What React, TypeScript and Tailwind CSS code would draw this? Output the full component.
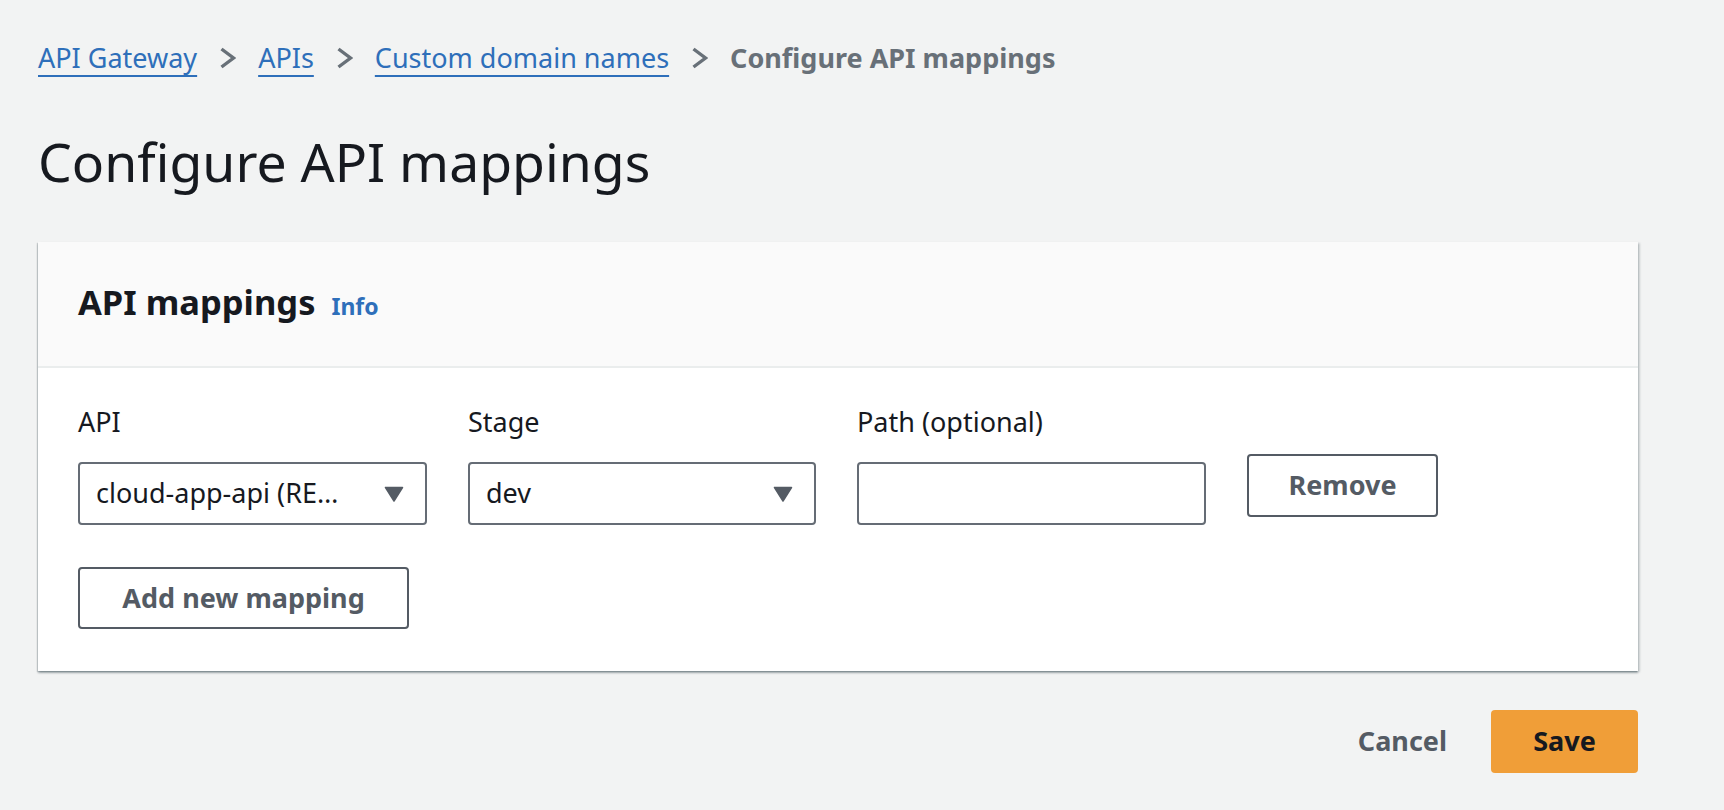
import React from 'react'

const font = { fontFamily: '"Noto Sans", "Open Sans", Arial, sans-serif' }

function Chevron() {
  return (
    <svg width="17" height="22" viewBox="0 0 17 22" className="shrink-0">
      <path d="M2.5 2 L14.5 11 L2.5 20" fill="none" stroke="#687078" strokeWidth="3.4" strokeLinejoin="miter" />
    </svg>
  )
}

function Caret() {
  return (
    <svg width="20" height="16" viewBox="0 0 20 16" className="shrink-0">
      <path d="M1.5 1.5 H18.5 L10 15 Z" fill="#545b64" stroke="#545b64" strokeWidth="1.5" strokeLinejoin="round" />
    </svg>
  )
}

function Crumb({ children }: { children: React.ReactNode }) {
  return (
    <a href="#" className="text-[#2e6fba] underline decoration-2 underline-offset-[7px]">
      {children}
    </a>
  )
}

export default function App() {
  return (
    <div className="min-h-screen bg-[#f2f3f3] text-[#16191f]" style={font}>
      <div className="pl-[38px] pr-[86px] pt-[40px]">
        <nav className="flex items-center gap-[22px] text-[27px] leading-[36px]">
          <Crumb>API Gateway</Crumb>
          <Chevron />
          <Crumb>APIs</Crumb>
          <Chevron />
          <Crumb>Custom domain names</Crumb>
          <Chevron />
          <span className="font-bold text-[#687078]">Configure API mappings</span>
        </nav>

        <h1 className="mt-[54px] text-[53.5px] leading-[64px] font-normal">Configure API mappings</h1>

        <section className="mt-[48px] w-[1600px] bg-white shadow-[0_2px_2px_rgba(0,28,36,0.3),2px_1px_2px_rgba(0,28,36,0.15),-1px_1px_1px_rgba(0,28,36,0.15)]">
          <div className="flex items-baseline gap-[16px] border-b-2 border-[#eaeded] bg-[#fafafa] px-[40px] pt-[38px] pb-[42px]">
            <h2 className="text-[34.5px] leading-[44px] font-bold">API mappings</h2>
            <a href="#" className="text-[23px] font-bold text-[#2e6fba]">Info</a>
          </div>

          <div className="px-[40px] pt-[36px] pb-[42px]">
            <div className="flex items-start gap-[41px]">
              <div className="w-[349px]">
                <div className="text-[27px] leading-[36px]">API</div>
                <div className="mt-[22px] flex h-[63px] items-center rounded-[4px] border-2 border-[#656c75] pl-[16px] pr-[21px] text-[27px]">
                  <span className="whitespace-nowrap">cloud-app-api (RE…</span>
                  <span className="ml-auto"><Caret /></span>
                </div>
              </div>
              <div className="w-[348px]">
                <div className="text-[27px] leading-[36px]">Stage</div>
                <div className="mt-[22px] flex h-[63px] items-center rounded-[4px] border-2 border-[#656c75] pl-[16px] pr-[21px] text-[27px]">
                  <span>dev</span>
                  <span className="ml-auto"><Caret /></span>
                </div>
              </div>
              <div className="w-[349px]">
                <div className="text-[27px] leading-[36px]">Path (optional)</div>
                <input
                  className="mt-[22px] h-[63px] w-full rounded-[4px] border-2 border-[#656c75] bg-white px-[16px] text-[27px] outline-none"
                  style={font}
                />
              </div>
              <div className="pt-[50px]">
                <button className="h-[63px] w-[191px] rounded-[4px] border-2 border-[#545b64] bg-white text-[27px] font-bold text-[#545b64]" style={font}>
                  Remove
                </button>
              </div>
            </div>

            <button className="mt-[42px] h-[62px] w-[331px] rounded-[4px] border-2 border-[#545b64] bg-white text-[27px] font-bold text-[#545b64]" style={font}>
              Add new mapping
            </button>
          </div>
        </section>

        <div className="mt-[39px] flex w-[1600px] items-center justify-end gap-[44px]">
          <button className="text-[27px] font-bold text-[#545b64]" style={font}>Cancel</button>
          <button className="h-[63px] w-[147px] rounded-[4px] bg-[#f09e38] text-[27px] font-bold text-[#16191f]" style={font}>
            Save
          </button>
        </div>
      </div>
    </div>
  )
}
